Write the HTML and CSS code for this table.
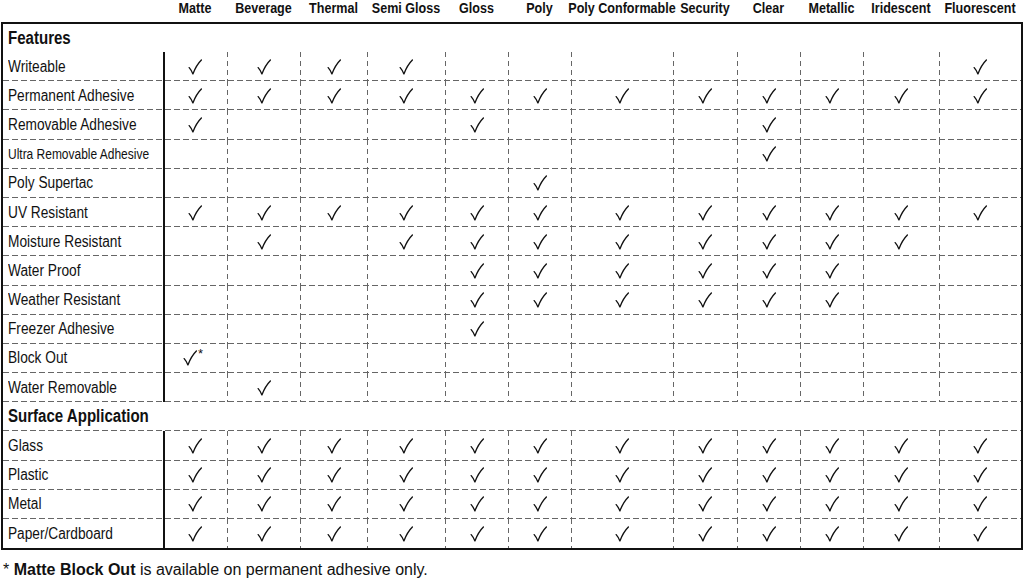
FILE: index.html
```html
<!DOCTYPE html>
<html>
<head>
<meta charset="utf-8">
<link rel="stylesheet" href="styles.css">
</head>
<body>
<svg class="defs" width="0" height="0" aria-hidden="true">
  <symbol id="ck" viewBox="0 0 14 16">
    <path d="M1.2 8.6 C2.6 10.2 3.8 12.2 4.9 14.9 C6.9 9.6 9.6 4.6 13.4 0.9" fill="none" stroke="#111" stroke-width="1.35" stroke-linecap="round" stroke-linejoin="round"/>
  </symbol>
</svg>

<div class="heads">
  <span></span><span>Matte</span><span>Beverage</span><span>Thermal</span><span>Semi Gloss</span><span>Gloss</span><span>Poly</span><span>Poly Conformable</span><span>Security</span><span>Clear</span><span>Metallic</span><span>Iridescent</span><span>Fluorescent</span>
</div>

<div class="chart">
  <div class="row sec first"><div class="lbl"><span>Features</span></div></div>

  <div class="row"><div class="lbl"><span>Writeable</span></div>
    <div class="c"><svg class="ck"><use href="#ck"/></svg></div><div class="c"><svg class="ck"><use href="#ck"/></svg></div><div class="c"><svg class="ck"><use href="#ck"/></svg></div><div class="c"><svg class="ck"><use href="#ck"/></svg></div><div class="c"></div><div class="c"></div><div class="c"></div><div class="c"></div><div class="c"></div><div class="c"></div><div class="c"></div><div class="c"><svg class="ck"><use href="#ck"/></svg></div>
  </div>

  <div class="row"><div class="lbl"><span>Permanent Adhesive</span></div>
    <div class="c"><svg class="ck"><use href="#ck"/></svg></div><div class="c"><svg class="ck"><use href="#ck"/></svg></div><div class="c"><svg class="ck"><use href="#ck"/></svg></div><div class="c"><svg class="ck"><use href="#ck"/></svg></div><div class="c"><svg class="ck"><use href="#ck"/></svg></div><div class="c"><svg class="ck"><use href="#ck"/></svg></div><div class="c"><svg class="ck"><use href="#ck"/></svg></div><div class="c"><svg class="ck"><use href="#ck"/></svg></div><div class="c"><svg class="ck"><use href="#ck"/></svg></div><div class="c"><svg class="ck"><use href="#ck"/></svg></div><div class="c"><svg class="ck"><use href="#ck"/></svg></div><div class="c"><svg class="ck"><use href="#ck"/></svg></div>
  </div>

  <div class="row"><div class="lbl"><span>Removable Adhesive</span></div>
    <div class="c"><svg class="ck"><use href="#ck"/></svg></div><div class="c"></div><div class="c"></div><div class="c"></div><div class="c"><svg class="ck"><use href="#ck"/></svg></div><div class="c"></div><div class="c"></div><div class="c"></div><div class="c"><svg class="ck"><use href="#ck"/></svg></div><div class="c"></div><div class="c"></div><div class="c"></div>
  </div>

  <div class="row"><div class="lbl small"><span>Ultra Removable Adhesive</span></div>
    <div class="c"></div><div class="c"></div><div class="c"></div><div class="c"></div><div class="c"></div><div class="c"></div><div class="c"></div><div class="c"></div><div class="c"><svg class="ck"><use href="#ck"/></svg></div><div class="c"></div><div class="c"></div><div class="c"></div>
  </div>

  <div class="row"><div class="lbl"><span>Poly Supertac</span></div>
    <div class="c"></div><div class="c"></div><div class="c"></div><div class="c"></div><div class="c"></div><div class="c"><svg class="ck"><use href="#ck"/></svg></div><div class="c"></div><div class="c"></div><div class="c"></div><div class="c"></div><div class="c"></div><div class="c"></div>
  </div>

  <div class="row"><div class="lbl"><span>UV Resistant</span></div>
    <div class="c"><svg class="ck"><use href="#ck"/></svg></div><div class="c"><svg class="ck"><use href="#ck"/></svg></div><div class="c"><svg class="ck"><use href="#ck"/></svg></div><div class="c"><svg class="ck"><use href="#ck"/></svg></div><div class="c"><svg class="ck"><use href="#ck"/></svg></div><div class="c"><svg class="ck"><use href="#ck"/></svg></div><div class="c"><svg class="ck"><use href="#ck"/></svg></div><div class="c"><svg class="ck"><use href="#ck"/></svg></div><div class="c"><svg class="ck"><use href="#ck"/></svg></div><div class="c"><svg class="ck"><use href="#ck"/></svg></div><div class="c"><svg class="ck"><use href="#ck"/></svg></div><div class="c"><svg class="ck"><use href="#ck"/></svg></div>
  </div>

  <div class="row"><div class="lbl"><span>Moisture Resistant</span></div>
    <div class="c"></div><div class="c"><svg class="ck"><use href="#ck"/></svg></div><div class="c"></div><div class="c"><svg class="ck"><use href="#ck"/></svg></div><div class="c"><svg class="ck"><use href="#ck"/></svg></div><div class="c"><svg class="ck"><use href="#ck"/></svg></div><div class="c"><svg class="ck"><use href="#ck"/></svg></div><div class="c"><svg class="ck"><use href="#ck"/></svg></div><div class="c"><svg class="ck"><use href="#ck"/></svg></div><div class="c"><svg class="ck"><use href="#ck"/></svg></div><div class="c"><svg class="ck"><use href="#ck"/></svg></div><div class="c"></div>
  </div>

  <div class="row"><div class="lbl"><span>Water Proof</span></div>
    <div class="c"></div><div class="c"></div><div class="c"></div><div class="c"></div><div class="c"><svg class="ck"><use href="#ck"/></svg></div><div class="c"><svg class="ck"><use href="#ck"/></svg></div><div class="c"><svg class="ck"><use href="#ck"/></svg></div><div class="c"><svg class="ck"><use href="#ck"/></svg></div><div class="c"><svg class="ck"><use href="#ck"/></svg></div><div class="c"><svg class="ck"><use href="#ck"/></svg></div><div class="c"></div><div class="c"></div>
  </div>

  <div class="row"><div class="lbl"><span>Weather Resistant</span></div>
    <div class="c"></div><div class="c"></div><div class="c"></div><div class="c"></div><div class="c"><svg class="ck"><use href="#ck"/></svg></div><div class="c"><svg class="ck"><use href="#ck"/></svg></div><div class="c"><svg class="ck"><use href="#ck"/></svg></div><div class="c"><svg class="ck"><use href="#ck"/></svg></div><div class="c"><svg class="ck"><use href="#ck"/></svg></div><div class="c"><svg class="ck"><use href="#ck"/></svg></div><div class="c"></div><div class="c"></div>
  </div>

  <div class="row"><div class="lbl"><span>Freezer Adhesive</span></div>
    <div class="c"></div><div class="c"></div><div class="c"></div><div class="c"></div><div class="c"><svg class="ck"><use href="#ck"/></svg></div><div class="c"></div><div class="c"></div><div class="c"></div><div class="c"></div><div class="c"></div><div class="c"></div><div class="c"></div>
  </div>

  <div class="row"><div class="lbl"><span>Block Out</span></div>
    <div class="c"><span class="star"><svg class="ck"><use href="#ck"/></svg><sup>*</sup></span></div><div class="c"></div><div class="c"></div><div class="c"></div><div class="c"></div><div class="c"></div><div class="c"></div><div class="c"></div><div class="c"></div><div class="c"></div><div class="c"></div><div class="c"></div>
  </div>

  <div class="row"><div class="lbl"><span>Water Removable</span></div>
    <div class="c"></div><div class="c"><svg class="ck"><use href="#ck"/></svg></div><div class="c"></div><div class="c"></div><div class="c"></div><div class="c"></div><div class="c"></div><div class="c"></div><div class="c"></div><div class="c"></div><div class="c"></div><div class="c"></div>
  </div>

  <div class="row sec"><div class="lbl"><span>Surface Application</span></div></div>

  <div class="row"><div class="lbl"><span>Glass</span></div>
    <div class="c"><svg class="ck"><use href="#ck"/></svg></div><div class="c"><svg class="ck"><use href="#ck"/></svg></div><div class="c"><svg class="ck"><use href="#ck"/></svg></div><div class="c"><svg class="ck"><use href="#ck"/></svg></div><div class="c"><svg class="ck"><use href="#ck"/></svg></div><div class="c"><svg class="ck"><use href="#ck"/></svg></div><div class="c"><svg class="ck"><use href="#ck"/></svg></div><div class="c"><svg class="ck"><use href="#ck"/></svg></div><div class="c"><svg class="ck"><use href="#ck"/></svg></div><div class="c"><svg class="ck"><use href="#ck"/></svg></div><div class="c"><svg class="ck"><use href="#ck"/></svg></div><div class="c"><svg class="ck"><use href="#ck"/></svg></div>
  </div>

  <div class="row"><div class="lbl"><span>Plastic</span></div>
    <div class="c"><svg class="ck"><use href="#ck"/></svg></div><div class="c"><svg class="ck"><use href="#ck"/></svg></div><div class="c"><svg class="ck"><use href="#ck"/></svg></div><div class="c"><svg class="ck"><use href="#ck"/></svg></div><div class="c"><svg class="ck"><use href="#ck"/></svg></div><div class="c"><svg class="ck"><use href="#ck"/></svg></div><div class="c"><svg class="ck"><use href="#ck"/></svg></div><div class="c"><svg class="ck"><use href="#ck"/></svg></div><div class="c"><svg class="ck"><use href="#ck"/></svg></div><div class="c"><svg class="ck"><use href="#ck"/></svg></div><div class="c"><svg class="ck"><use href="#ck"/></svg></div><div class="c"><svg class="ck"><use href="#ck"/></svg></div>
  </div>

  <div class="row"><div class="lbl"><span>Metal</span></div>
    <div class="c"><svg class="ck"><use href="#ck"/></svg></div><div class="c"><svg class="ck"><use href="#ck"/></svg></div><div class="c"><svg class="ck"><use href="#ck"/></svg></div><div class="c"><svg class="ck"><use href="#ck"/></svg></div><div class="c"><svg class="ck"><use href="#ck"/></svg></div><div class="c"><svg class="ck"><use href="#ck"/></svg></div><div class="c"><svg class="ck"><use href="#ck"/></svg></div><div class="c"><svg class="ck"><use href="#ck"/></svg></div><div class="c"><svg class="ck"><use href="#ck"/></svg></div><div class="c"><svg class="ck"><use href="#ck"/></svg></div><div class="c"><svg class="ck"><use href="#ck"/></svg></div><div class="c"><svg class="ck"><use href="#ck"/></svg></div>
  </div>

  <div class="row last"><div class="lbl"><span>Paper/Cardboard</span></div>
    <div class="c"><svg class="ck"><use href="#ck"/></svg></div><div class="c"><svg class="ck"><use href="#ck"/></svg></div><div class="c"><svg class="ck"><use href="#ck"/></svg></div><div class="c"><svg class="ck"><use href="#ck"/></svg></div><div class="c"><svg class="ck"><use href="#ck"/></svg></div><div class="c"><svg class="ck"><use href="#ck"/></svg></div><div class="c"><svg class="ck"><use href="#ck"/></svg></div><div class="c"><svg class="ck"><use href="#ck"/></svg></div><div class="c"><svg class="ck"><use href="#ck"/></svg></div><div class="c"><svg class="ck"><use href="#ck"/></svg></div><div class="c"><svg class="ck"><use href="#ck"/></svg></div><div class="c"><svg class="ck"><use href="#ck"/></svg></div>
  </div>
</div>

<p class="note">* <b>Matte Block Out</b> is available on permanent adhesive only.</p>
</body>
</html>
```

FILE: styles.css
```css
:root {
  --cols: 160px 64px 73px 67px 78px 63px 63px 102px 64px 63px 63px 76px 82px;
}
html, body {
  margin: 0;
  background: #fff;
  color: #111;
}
body {
  font-family: "Liberation Sans", Arial, sans-serif;
}
.defs {
  position: absolute;
  width: 0;
  height: 0;
  overflow: hidden;
}
.heads {
  display: grid;
  grid-template-columns: var(--cols);
  margin-left: 3px;
  height: 22px;
  align-items: start;
}
.heads span {
  display: flex;
  justify-content: center;
  font-weight: bold;
  font-size: 15.5px;
  line-height: 16px;
  white-space: nowrap;
  transform: scaleX(0.81);
  transform-origin: center;
}
.chart {
  margin-left: 1px;
  width: 1018px;
  border: 2px solid #111;
}
.row {
  display: grid;
  grid-template-columns: var(--cols);
  height: 29.2px;
  background: repeating-linear-gradient(90deg, #666 0 6px, transparent 6px 9px) left bottom / 100% 1px no-repeat;
}
.row.first {
  height: 28px;
  background: none;
}
.row.last {
  background: none;
}
.lbl {
  display: flex;
  align-items: center;
  padding-left: 5px;
  font-size: 16px;
  white-space: nowrap;
}
.lbl span {
  display: inline-block;
  transform: scaleX(0.855);
  transform-origin: left center;
}
.lbl.small {
  font-size: 14px;
}
.sec .lbl {
  font-weight: bold;
  font-size: 17.5px;
  grid-column: 1 / -1;
}
.sec .lbl span {
  transform: scaleX(0.86);
}
.c {
  display: flex;
  align-items: center;
  justify-content: center;
  background: repeating-linear-gradient(180deg, #666 0 5px, transparent 5px 9px) left top / 1px 100% no-repeat;
}
.row > .c:nth-child(2) {
  background: linear-gradient(#111, #111) left top / 2px 100% no-repeat;
}
.ck {
  width: 14px;
  height: 16px;
  display: block;
}
.star {
  display: flex;
  align-items: flex-start;
  margin-left: -4px;
}
.star sup {
  font-size: 13px;
  line-height: 1;
  margin-left: 1px;
  margin-top: -3px;
}
.note {
  margin: 11px 0 0 3px;
  font-size: 16px;
}
```
